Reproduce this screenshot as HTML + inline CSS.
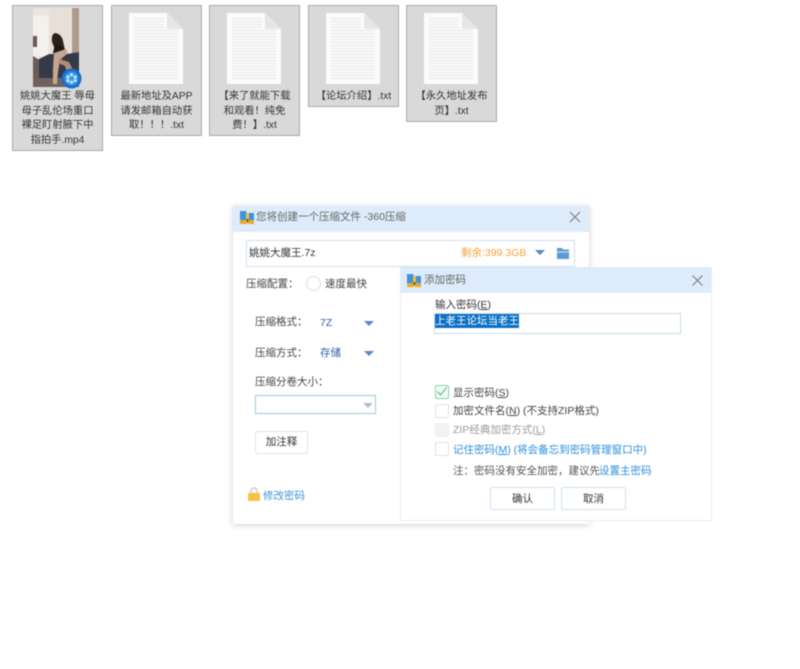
<!DOCTYPE html>
<html lang="zh"><head><meta charset="utf-8">
<style>
html,body{margin:0;padding:0;background:#fff}
body{width:800px;height:669px;position:relative;overflow:hidden;font-family:"Liberation Sans","Noto Sans CJK SC",sans-serif;font-size:10.5px;color:#444}
#w{position:absolute;left:0;top:0;width:800px;height:669px;filter:blur(.4px)}
.a{position:absolute;white-space:nowrap;line-height:15px}
.f{position:absolute;top:5px;width:89px;background:#d9d9d9;border:1px solid #aaa;box-sizing:content-box}
.f .t{position:absolute;left:0;right:0;top:84px;text-align:center;line-height:14.7px;font-size:10.3px;color:#333;white-space:nowrap}
.doc{position:absolute;left:17px;top:7px}
.cb{position:absolute;width:12px;height:12px;left:435px;border:1px solid #e2e2e2;border-radius:2px;background:#fff}
.btn{position:absolute;box-sizing:border-box;border:1px solid #cfe0f0;border-radius:2px;background:#fff;text-align:center;color:#333;font-size:10.5px}
.tri{position:absolute;width:0;height:0;border-left:5px solid transparent;border-right:5px solid transparent;border-top:5px solid #5b86c8}
.b{color:#2f5da8}
.l{color:#2b8fdc}
</style></head><body>
<div id="w">
<svg width="0" height="0" style="position:absolute"><defs>
<g id="d">
<path d="M0 0H38L54 16V71H0Z" fill="#fbfbfb"/>
<path d="M38 0L54 16H38Z" fill="#e6e6e6"/>
<path d="M5 5.500H35M5 8.500H35M5 11.500H35M5 14.500H35M5 17.500H49M5 20.500H49M5 23.500H49M5 26.500H49M5 29.500H49M5 32.500H49M5 35.500H49M5 38.500H49M5 41.500H49M5 44.500H49M5 47.500H49M5 50.500H49M5 53.500H49M5 56.500H49M5 59.500H49M5 62.500H49M5 65.500H49" stroke="#e6e6e6" stroke-width="1"/>
</g>
<g id="zip">
<path d="M0 0H6L7 2H14V13H0Z" fill="#3f93dc"/>
<rect x="0" y="9" width="14" height="4" fill="#e8a92e"/>
<rect x="6" y="2" width="3" height="11" fill="#e9c04a"/>
<rect x="6.500" y="8" width="2" height="3" fill="#7a5a10"/>
</g>
</defs></svg>

<div class="f" style="left:12px;height:144px">
<svg style="position:absolute;left:20px;top:2px" width="46" height="79" viewBox="0 0 46 79">
<rect width="46" height="79" rx="1" fill="#ece5e0"/>
<rect x="0" y="8" width="16" height="40" fill="#f4f0ec"/>
<rect x="16" y="0" width="22" height="44" fill="#e9dfd9"/>
<rect x="39" width="7" height="46" fill="#b09a8e"/>
<rect x="0" y="28" width="4" height="11" fill="#6a5a60"/>
<path d="M4 52L16 46L34 46L46 44V70H4Z" fill="#343a48"/>
<path d="M0 48L6 52V72H0Z" fill="#6a5c54"/>
<rect x="0" y="70" width="46" height="9" fill="#6f625c"/>
<path d="M19 34Q18 25 23 25Q29 27 30 33L32 42L24 46Z" fill="#2e2019"/>
<path d="M22 36L29 38L33 46L24 49L20 45Z" fill="#1d1917"/>
<path d="M21 45L33 41L35 45L27 52L25 64L24 76L20 76L20 60Z" fill="#c8a58e"/>
<path d="M26 51L36 54L41 64L35 67L32 58L25 55Z" fill="#b58c74"/>
</svg>
<svg style="position:absolute;left:48px;top:62px" width="21" height="21" viewBox="0 0 21 21">
<circle cx="10.500" cy="10.500" r="10" fill="#1570cc"/>
<circle cx="10.500" cy="10.500" r="7" fill="#3b94e2"/>
<circle cx="10.500" cy="6.800" r="1.600" fill="#c6e6fa"/><circle cx="10.500" cy="14.200" r="1.600" fill="#c6e6fa"/>
<circle cx="6.900" cy="9" r="1.600" fill="#c6e6fa"/><circle cx="14.100" cy="9" r="1.600" fill="#c6e6fa"/>
<circle cx="6.900" cy="12.600" r="1.600" fill="#c6e6fa"/><circle cx="14.100" cy="12.600" r="1.600" fill="#c6e6fa"/>
</svg>
<div class="t">姚姚大魔王 辱母<br>母子乱伦场重口<br>裸足盯射腋下中<br>指拍手.mp4</div>
</div>

<div class="f" style="left:111px;height:129px"><svg class="doc" width="55" height="72"><use href="#d"/></svg><div class="t">最新地址及APP<br>请发邮箱自动获<br>取！！！.txt</div></div>
<div class="f" style="left:209px;height:129px"><svg class="doc" width="55" height="72"><use href="#d"/></svg><div class="t">【来了就能下载<br>和观看！纯免<br>费！】.txt</div></div>
<div class="f" style="left:308px;height:100px"><svg class="doc" width="55" height="72"><use href="#d"/></svg><div class="t">【论坛介绍】.txt</div></div>
<div class="f" style="left:406px;height:115px"><svg class="doc" width="55" height="72"><use href="#d"/></svg><div class="t">【永久地址发布<br>页】.txt</div></div>

<!-- main dialog -->
<div style="position:absolute;left:233px;top:206px;width:356px;height:318px;background:#fff;box-shadow:0 1px 6px rgba(0,0,0,.2)"></div>
<div style="position:absolute;left:233px;top:206px;width:356px;height:26px;background:#deebfa"></div>
<svg class="a" style="left:240px;top:211px" width="15" height="14"><use href="#zip"/></svg>
<div class="a" style="left:256px;top:210px;color:#666">您将创建一个压缩文件 -360压缩</div>
<svg class="a" style="left:569px;top:211px" width="12" height="12"><path d="M1 1L11 11M11 1L1 11" stroke="#777" stroke-width="1" fill="none"/></svg>
<div style="position:absolute;left:246px;top:240px;width:327px;height:25px;border:1px solid #cfe0f2;background:#fff"></div>
<div class="a" style="left:249px;top:246px;color:#333">姚姚大魔王.7z</div>
<div class="a" style="left:461px;top:246px;color:#f5a33c">剩余:399.3GB</div>
<div class="tri" style="left:535px;top:250px"></div>
<svg class="a" style="left:557px;top:248px" width="12" height="11"><path d="M0 0H5L6 1.500H12V11H0Z" fill="#5f98d8"/><rect x="0" y="3.500" width="12" height="1" fill="#d6e6f7"/></svg>

<div class="a" style="left:246px;top:277px;color:#444">压缩配置：</div>
<div style="position:absolute;left:306px;top:276px;width:13px;height:13px;border:1px solid #ddd;border-radius:50%;background:#fff"></div>
<div class="a" style="left:325px;top:277px;color:#444">速度最快</div>
<div class="a" style="left:255px;top:315px;color:#444">压缩格式：</div>
<div class="a b" style="left:320px;top:316px">7Z</div>
<div class="tri" style="left:364px;top:321px"></div>
<div class="a" style="left:255px;top:346px;color:#444">压缩方式：</div>
<div class="a b" style="left:320px;top:346px">存储</div>
<div class="tri" style="left:364px;top:351px"></div>
<div class="a" style="left:255px;top:375px;color:#444">压缩分卷大小：</div>
<div style="position:absolute;left:255px;top:395px;width:119px;height:17px;border:1px solid #9cc8dc;background:#fff"></div>
<div class="tri" style="left:363px;top:403px;border-top-color:#a9bfd8"></div>
<div class="btn" style="left:255px;top:431px;width:53px;height:23px;line-height:21px;border-color:#dde6ee">加注释</div>
<svg class="a" style="left:248px;top:487px" width="12" height="14"><path d="M3 6V4Q3 1 6 1T9 4V6" fill="none" stroke="#ccc" stroke-width="1.500"/><rect y="6" width="12" height="8" rx="1" fill="#f6c244"/></svg>
<div class="a" style="left:263px;top:489px;color:#3a94dc">修改密码</div>

<!-- password dialog -->
<div style="position:absolute;left:400px;top:267px;width:310px;height:253px;background:#fff;border:1px solid #e8edf3;border-top:0"></div>
<div style="position:absolute;left:400px;top:267px;width:311px;height:26px;background:#deebfa"></div>
<svg class="a" style="left:407px;top:274px" width="15" height="14"><use href="#zip"/></svg>
<div class="a" style="left:424px;top:273px;color:#666">添加密码</div>
<svg class="a" style="left:692px;top:275px" width="11" height="11"><path d="M.5 .5L10.500 10.500M10.500 .5L.5 10.500" stroke="#777" stroke-width="1" fill="none"/></svg>
<div class="a" style="left:435px;top:298px;color:#333">输入密码(<u>E</u>)</div>
<div style="position:absolute;left:434px;top:313px;width:245px;height:19px;border:1px solid #c6dcea;background:#fff"></div>
<div class="a" style="left:435px;top:314px;width:84px;height:14px;background:#0a6fc4"></div>
<div class="a" style="left:435px;top:314px;color:#fff">上老王论坛当老王</div>

<div class="cb" style="top:385px;border-color:#84d6ac;background:#f2fbf6"></div>
<svg class="a" style="left:436px;top:386px" width="12" height="11"><path d="M1.500 5.500L4.500 9L10.500 1.500" stroke="#5cc48c" stroke-width="1.200" fill="none"/></svg>
<div class="a" style="left:453px;top:386px;color:#444">显示密码(<u>S</u>)</div>
<div class="cb" style="top:404px"></div>
<div class="a" style="left:453px;top:404px;color:#444">加密文件名(<u>N</u>) (不支持ZIP格式)</div>
<div class="cb" style="top:423px;background:#f3f3f3;border-color:#f0f0f0"></div>
<div class="a" style="left:453px;top:423px;color:#999">ZIP经典加密方式(<u>L</u>)</div>
<div class="cb" style="top:442px"></div>
<div class="a l" style="left:453px;top:443px">记住密码(<u>M</u>) (将会备忘到密码管理窗口中)</div>
<div class="a" style="left:453px;top:464px;color:#555">注：密码没有安全加密，建议先</div>
<div class="a l" style="left:599px;top:464px">设置主密码</div>
<div class="btn" style="left:490px;top:487px;width:65px;height:23px;line-height:22px">确认</div>
<div class="btn" style="left:561px;top:487px;width:65px;height:23px;line-height:22px">取消</div>
</div>
</body></html>
